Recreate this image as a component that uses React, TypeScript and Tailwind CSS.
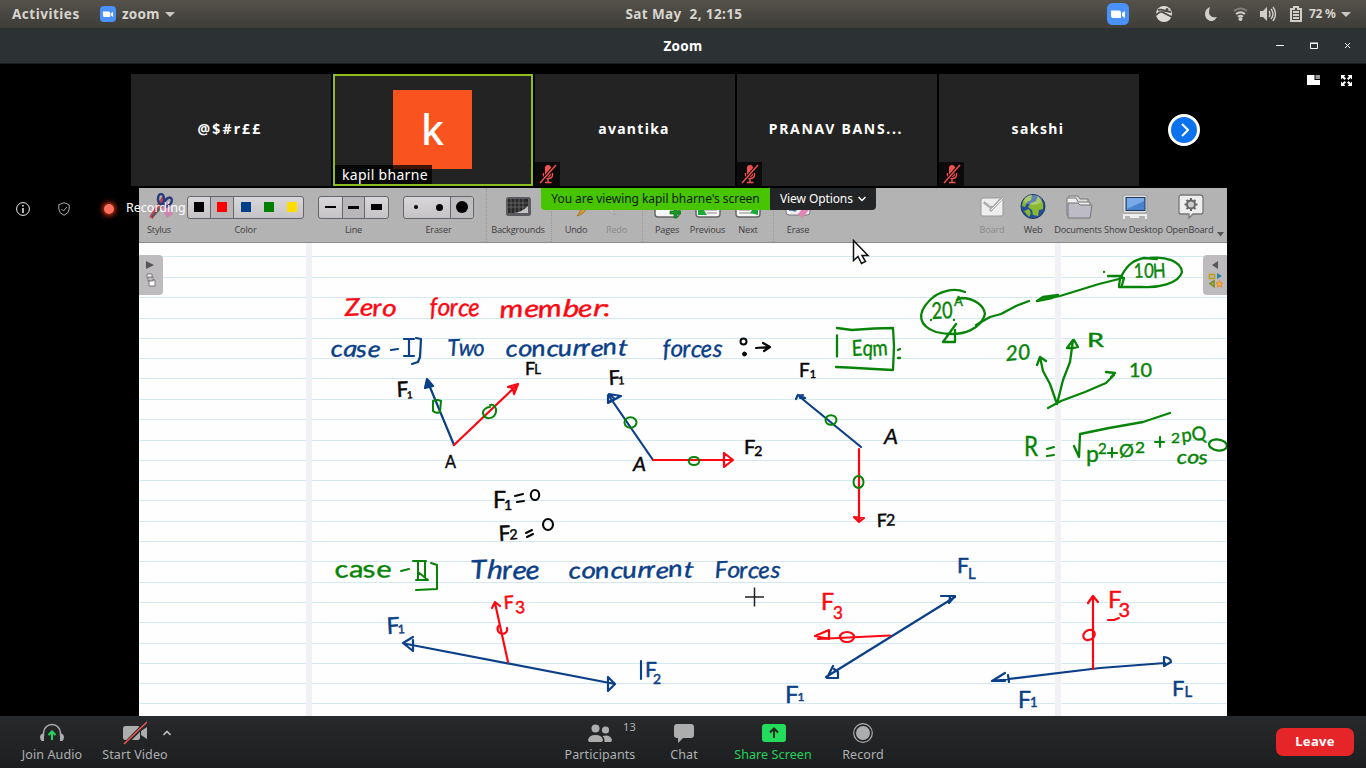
import React from "react";

const INK = { red: "#fb0812", blue: "#0b3f87", green: "#078407", black: "#080808" };

type InkProps = { x: number; y: number; w: number; s?: number; c: string; r?: number; i?: boolean; children: string };

const wobble = "0 -.8 1.1 -.6 .8 -.9 .5 .6 -.9 .4";
const tilt = "-3 4 -4 5 -3 4 -5 3 -4 5";

function Ink({ x, y, w, s = 23, c, r = 0, i = false, children }: InkProps) {
  const loose = children.length > 2;
  return (
    <text
      x={x}
      y={y}
      dy={loose ? wobble : undefined}
      rotate={loose ? tilt : undefined}
      textLength={w}
      lengthAdjust="spacingAndGlyphs"
      fontSize={s}
      fill={c}
      stroke={c}
      strokeWidth={0.4}
      fontStyle={i ? "italic" : "normal"}
      transform={r ? `rotate(${r} ${x} ${y})` : undefined}
    >
      {children}
    </text>
  );
}

type ForceProps = { x: number; y: number; s: number; n: string; ns: number; dx?: number; dy?: number; c: string; r?: number };

function Force({ x, y, s, n, ns, dx = 0, dy = 1, c, r = 0 }: ForceProps) {
  return (
    <text x={x} y={y} fontSize={s} fill={c} stroke={c} strokeWidth={0.5} transform={r ? `rotate(${r} ${x} ${y})` : undefined}>
      F<tspan dx={dx} dy={dy} fontSize={ns}>{n}</tspan>
    </text>
  );
}

const ruleYs = [256.5, 277.5, 297.5, 318.5, 338.5, 358.5, 378.5, 399.5, 419.5, 440.5, 460.5, 480.5, 500.5, 521.5, 541.5, 561.5, 582.5, 602.5, 622.5, 643.5, 663.5, 683.5, 703.5];

function Notebook() {
  const { red, blue, green, black } = INK;
  return (
    <svg className="block h-[473px] w-[1088px] bg-[#fefefe] font-['Lato',sans-serif]" viewBox="139 243 1088 473" fill="none" strokeLinecap="round" strokeLinejoin="round">
      {ruleYs.map((y) => (
        <path key={y} d={`M139 ${y}H1227`} stroke="#d3e8f1" />
      ))}
      <path d="M306 243h6v473h-6zM1055 243h6v473h-6z" fill="#f1f0f4" />

      <Ink x={345} y={316} w={51} s={24} c={red} i>Zero</Ink>
      <Ink x={430} y={316} w={50} s={25} c={red} i>force</Ink>
      <Ink x={500} y={318} w={111} s={24} c={red} r={-1} i>member:</Ink>

      <Ink x={331} y={357} w={49} s={23} c={blue} i>case</Ink>
      <path d="M391 350l7-1" stroke={blue} strokeWidth="2.2" />
      <path d="M404 339h10M409 339v17M404 356h10M416 338l5 1-1 18-2 5-6 2" stroke={blue} strokeWidth="2.2" />
      <Ink x={448} y={356} w={37} s={23} c={blue} i>Two</Ink>
      <Ink x={506} y={357} w={121} s={23} c={blue} r={-1} i>concurrent</Ink>
      <Ink x={663} y={357} w={59} s={24} c={blue} i>forces</Ink>
      <circle cx="743.5" cy="341.5" r="3" stroke={black} strokeWidth="2" />
      <circle cx="744.5" cy="354" r="2" fill={black} stroke={black} />
      <path d="M756 348l13-1M763 343l7 4-6 4" stroke={black} strokeWidth="2.2" />

      <g stroke={green} strokeWidth="2.3">
        <path d="M837 335.5v21M837 328l15 2 22-1.5 19-.5 1 18-1 24-19-1-26-1.500-12-.5" />
        <path d="M898 350l2-1M898 358h2" />
      </g>
      <Ink x={852} y={356} w={36} s={22} c={green}>Eqm</Ink>

      <g strokeWidth="2.2">
        <path d="M454 445L427 380" stroke={blue} />
        <path d="M425 388l2-9 6 7z" stroke={blue} fill={blue} />
        <path d="M454 445L517 385M508 387l10-3-4 10-1-6z" stroke={red} />
        <path d="M433 401q4-2 8 0l-1 11q-4 2-7-1z" stroke={green} strokeWidth="2" />
        <path d="M490 405c4-1 7 3 6 7-2 8-12 8-13 1 0-3 3-6 7-6" stroke={green} strokeWidth="2" />
        <path d="M653 460L609 396M608 395v8l13-7-12-2 6 5-7 3" stroke={blue} />
        <path d="M653 460H731M724 453v14l9-7z" stroke={red} />
        <path d="M861 447L800 397M796 399l2-4 7 3-5 0M797 396l6-1" stroke={blue} />
        <path d="M859 449V521M854 517l5 5 5-4z" stroke={red} />
        <g stroke={green} strokeWidth="2">
          <ellipse cx="630.5" cy="422.500" rx="6" ry="5.300" />
          <ellipse cx="694" cy="461" rx="5.300" ry="4" />
          <ellipse cx="831" cy="420" rx="5.500" ry="4.800" />
          <ellipse cx="858.500" cy="482" rx="5" ry="6" />
        </g>
      </g>
      <Force x={397} y={397} s={21} n="1" ns={10} dx={-2} dy={2} c={black} r={-3} />
      <Force x={525} y={375} s={18} n="L" ns={13} dx={-1} dy={-1} c={black} />
      <Force x={609} y={385} s={20} n="1" ns={11} dx={-2} dy={0} c={black} r={-3} />
      <Force x={744} y={454} s={20} n="2" ns={14} dx={-1} dy={2} c={black} />
      <Force x={799} y={377} s={19} n="1" ns={11} c={black} />
      <Force x={877} y={527} s={18} n="2" ns={16} dx={-1} dy={-1} c={black} r={-2} />
      <Ink x={445} y={468} w={11} s={17} c={black}>A</Ink>
      <Ink x={633} y={471} w={13} s={19} c={black} i>A</Ink>
      <Ink x={884} y={444} w={14} s={21} c={black} i>A</Ink>
      <Force x={493} y={508} s={23} n="1" ns={14} dx={-2} dy={2} c={black} />
      <path d="M515 496l8-2M517 502l7-1" stroke={black} strokeWidth="2.1" />
      <ellipse cx="535" cy="495" rx="4.200" ry="5" stroke={black} strokeWidth="2.1" />
      <Force x={499} y={541} s={21} n="2" ns={14} dx={-1} dy={-1} c={black} r={-3} />
      <path d="M526 533l6-3M527 537l6-3" stroke={black} strokeWidth="2.1" />
      <ellipse cx="548" cy="524.500" rx="5" ry="5.500" stroke={black} strokeWidth="2.1" />

      <Ink x={335} y={578} w={56} s={24} c={green} r={-1}>case</Ink>
      <path d="M401 571l8-2M413 561h13M418 561v19M425 562v18M416 580h12l-10-8M431 563l6 2v24l-21 1" stroke={green} strokeWidth="2" />
      <Ink x={471} y={579} w={69} s={26} c={blue} i>Three</Ink>
      <Ink x={569} y={579} w={124} s={23} c={blue} r={-1} i>concurrent</Ink>
      <Ink x={715} y={578} w={65} s={23} c={blue} i>Forces</Ink>

      <g strokeWidth="2.2">
        <path d="M404 643.500L615 684M413 637l-10 6 10 8v-11M608 677v14l7-7-7-7" stroke={blue} />
        <path d="M508 662L495 603M492 608l3-6 5 4M500 625c-4 2-3 8 2 9 4 0 6-3 5-6" stroke={red} />
        <path d="M826 677L955 597M833 666l-6 12h11l0-6-4-3M941 596l14 0-6 7 1-6" stroke={blue} />
        <path d="M890 635.500L818 639M829 630l-14 6 14 3z" stroke={red} />
        <ellipse cx="847" cy="637" rx="7" ry="5" stroke={red} />
        <path d="M992 681L1100 668 1165 663M1005 673l-13 8 13 0M1008 675l1 7M1164 657q7 1 7 5l-7 4v-9" stroke={blue} />
        <path d="M1093 669V597M1088 603l5-7 5 6" stroke={red} />
        <ellipse cx="1089" cy="635" rx="6" ry="4.800" stroke={red} transform="rotate(-30 1089 635)" />
      </g>
      <Force x={387} y={634} s={23} n="1" ns={12} dx={-2} dy={0} c={blue} r={-3} />
      <Force x={504} y={609} s={18} n="3" ns={17} dx={1} dy={5} c={red} r={-3} />
      <path d="M641 661v18" stroke={blue} strokeWidth="2.1" />
      <Force x={645} y={677} s={21} n="2" ns={14} dx={-4} dy={7} c={blue} />
      <Force x={785} y={703} s={24} n="1" ns={12} dx={-1} dy={-2} c={blue} />
      <Force x={821} y={610} s={23} n="3" ns={17} dx={-1} dy={9} c={red} />
      <Force x={957} y={573} s={21} n="L" ns={15} dx={-1} dy={6} c={blue} />
      <Force x={1108} y={608} s={24} n="3" ns={20} dx={-3} dy={9} c={red} />
      <path d="M1108 620l6 0 5-2" stroke={red} strokeWidth="2.1" />
      <Force x={1018} y={708} s={23} n="1" ns={13} dx={-1} dy={-1} c={blue} />
      <Force x={1172} y={696} s={22} n="L" ns={15} dx={0} dy={1} c={blue} />

      <g stroke={green} strokeWidth="2.3">
        <path d="M965 292c-12-5-27 0-35 8-14 14-11 26 6 32 30 7 46-6 49-18-1-8-10-16-24-16l-4 2" />
        <path d="M976 325l14-8 11-3 15-8 13-5M1037 301l23-5 39-12 20-5M1037 301l6-4 15-2-6 3-15 3" />
        <path d="M956 324l-13 18h12v-12M1104 272h.1M931 320h.1M954 320h.1M1108 276h14" />
        <path d="M1122 275c6-11 12-15 22-17l13 1M1150 258c15-2 31 3 32 14-3 12-25 16-40 15h-23l1-9 4 0-2 7" />
        <path d="M1048 408l13-7 24-9 21-9 8-8M1106 372l9 1-4 4M1057 404l-7-20-7-13-3-14-3 8M1040 357l6 4M1057 404l6-24 7-18 3-22-6 8 7 0 4-1-4-7" />
        <path d="M1074 446l5 11 1-23 29-6 34-6 27-9" />
      </g>
      <Ink x={932} y={319} w={21} s={23} c={green} r={-3}>20</Ink>
      <Ink x={954} y={306} w={9} s={13} c={green}>A</Ink>
      <Ink x={1134} y={278} w={32} s={20} c={green}>10H</Ink>
      <Ink x={1006} y={361} w={25} s={21} c={green} r={-5} i>20</Ink>
      <Ink x={1087} y={347} w={17} s={19} c={green}>R</Ink>
      <Ink x={1129} y={377} w={23} s={19} c={green}>10</Ink>
      <Ink x={1024} y={456} w={14} s={27} c={green}>R</Ink>
      <path d="M1047 449l7-2M1047 456l7-1" stroke={green} strokeWidth="2.1" />
      <text x={1086} y={462} fontSize={23} fill={green} stroke={green} strokeWidth={0.4}>p<tspan dx={-1} dy={-8} fontSize={15}>2</tspan></text>
      <path d="M1108 453h9M1112 448v9" stroke={green} strokeWidth="2.1" />
      <Ink x={1119} y={457} w={15} s={18} c={green}>Ø</Ink>
      <Ink x={1135} y={453} w={10} s={15} c={green}>2</Ink>
      <path d="M1155 442h9M1160 437v10" stroke={green} strokeWidth="2.1" />
      <Ink x={1171} y={443} w={9} s={14} c={green}>2</Ink>
      <Ink x={1182} y={442} w={25} s={19} c={green} r={-6}>pQ</Ink>
      <Ink x={1177} y={464} w={31} s={19} c={green} i>cos</Ink>
      <ellipse cx="1218" cy="445" rx="9" ry="5.500" stroke={green} strokeWidth="2.3" transform="rotate(8 1218 445)" />
      <path d="M745 597h19M754.500 587.500v19" stroke="#222" strokeWidth="1.500" strokeLinecap="butt" />
    </svg>
  );
}

const Camera = ({ className }: { className: string }) => (
  <svg className={className} viewBox="0 0 22 22">
    <rect width="22" height="22" rx="5.500" fill="#4a91fb" />
    <path d="M4 7.500h8q2 0 2 2V15H6q-2 0-2-2zM15 10l3-2v7l-3-2z" fill="#fff" />
  </svg>
);

const MutedMic = () => (
  <span className="absolute bottom-0 left-0 flex h-6 w-[25px] items-center justify-center bg-[#0b0b0b]">
    <svg className="h-[20px] w-[18px]" viewBox="0 0 18 20" fill="none" stroke="#f4504e">
      <rect x="6" y="1" width="6" height="12" rx="3" fill="#f4504e" stroke="none" />
      <path d="M4.500 9v2q0 3.500 4.500 3.500t4.500-3.500V9M9 14.500V18M6 18.500h6.500" strokeWidth="1.400" />
      <path d="M1 19L17 1" stroke="#0b0b0b" strokeWidth="3.500" />
      <path d="M1 19L17 1" strokeWidth="1.400" />
    </svg>
  </span>
);

function Tile({ name, muted = false, spacing }: { name: string; muted?: boolean; spacing: string }) {
  return (
    <div className="relative flex h-28 w-[200px] items-center justify-center bg-[#232323] pb-[2px] pr-[2px]">
      <span className={`whitespace-nowrap text-sm font-bold text-white ${spacing}`}>{name}</span>
      {muted && <MutedMic />}
    </div>
  );
}

const Dots = ({ className = "" }: { className?: string }) => <i className={`h-[54px] w-0 shrink-0 border-l border-dotted border-[#969696] ${className}`} />;

function Tool({ label, className, faded = false, children }: { label: string; className: string; faded?: boolean; children?: React.ReactNode }) {
  return (
    <div className={`flex h-[54px] shrink-0 flex-col items-center pt-[5px] ${className}`}>
      <div className="flex h-7 items-center justify-center">{children}</div>
      <span className={`mt-[3px] whitespace-nowrap font-['Open_Sans',sans-serif] text-[9.200px] leading-3 tracking-[-0.2px] ${faded ? "text-[#8a8a8a]" : "text-[#3d3d3d]"}`}>{label}</span>
    </div>
  );
}

const group = "flex h-[23px] overflow-hidden rounded-[3px] border border-[#66666a] bg-linear-to-b from-[#d8d6d9] to-[#c5c3c6]";

const PageIcon = ({ kind }: { kind: string }) => (
  <svg className="h-7 w-7" viewBox="0 0 28 28">
    <rect x="2" y="3" width="24" height="21" rx="3" fill="#f7f7f7" stroke="#666" strokeWidth="1.500" />
    {kind === "add" && <path d="M17 18h4v-4h3v4h4v3h-4v4h-3v-4h-4z" fill="#159b22" stroke="#087111" strokeWidth=".7" />}
    {kind === "prev" && <><path d="M4 22V8l9 14z" fill="#19ab33" /><path d="M10 17h13M13 20h10" stroke="#888" /></>}
    {kind === "next" && <><path d="M24 22V8l-8 12z" fill="#19ab33" /><path d="M5 17h11M5 20h13" stroke="#888" /></>}
  </svg>
);

function BoardToolbar() {
  return (
    <div className="flex h-[55px] w-[1088px] border-b border-[#8b8b8b] bg-[#b4b3b4]">
      <Tool label="Stylus" className="w-10">
        <svg className="ml-1 h-7 w-7" viewBox="0 0 28 28" fill="none">
          <path d="M7 20L17 4M4 25l3-5" stroke="#c64353" strokeWidth="4" />
          <path d="M16 10l7 13" stroke="#cc86ad" strokeWidth="7" />
          <path d="M5 24L18 10" stroke="#555" strokeWidth="2" />
          <ellipse cx="14" cy="6" rx="3" ry="5" stroke="#263d7c" strokeWidth="2.500" />
          <ellipse cx="21" cy="9" rx="3" ry="5" stroke="#263d7c" strokeWidth="2.500" transform="rotate(35 21 9)" />
        </svg>
      </Tool>
      <Tool label="Color" className="ml-2 w-[117px]">
        <div className={`${group} w-[117px]`}>
          <i className="flex w-[23px] items-center justify-center border-r border-[#66666a]"><b className="size-[10px] bg-black" /></i>
          <i className="flex w-[23px] items-center justify-center border-r border-[#66666a] bg-[#b8b6b8]"><b className="size-[10px] bg-[#ff0000]" /></i>
          <i className="flex w-[23px] items-center justify-center"><b className="size-[10px] bg-[#003f87]" /></i>
          <i className="flex w-[23px] items-center justify-center"><b className="size-[10px] bg-[#008000]" /></i>
          <i className="flex w-[23px] items-center justify-center"><b className="size-[10px] bg-[#ffdd00]" /></i>
        </div>
      </Tool>
      <Tool label="Line" className="ml-[14px] w-[71px]">
        <div className={`${group} w-[71px]`}>
          <i className="flex w-6 items-center justify-center border-r border-[#66666a]"><b className="h-[2px] w-[11px] bg-black" /></i>
          <i className="flex w-[22px] items-center justify-center border-r border-[#66666a] bg-[#b8b6b8]"><b className="h-[3px] w-[11px] bg-black" /></i>
          <i className="flex w-[23px] items-center justify-center"><b className="h-[6px] w-[11px] bg-black" /></i>
        </div>
      </Tool>
      <Tool label="Eraser" className="ml-[14px] w-[71px]">
        <div className={`${group} w-[71px]`}>
          <i className="flex w-6 items-center justify-center"><b className="size-1 rounded-full bg-black" /></i>
          <i className="flex w-[23px] items-center justify-center border-r border-[#66666a]"><b className="size-[7px] rounded-full bg-black" /></i>
          <i className="flex w-[22px] items-center justify-center bg-[#bebcbf]"><b className="size-3 rounded-full bg-black" /></i>
        </div>
      </Tool>
      <Dots className="ml-[12px]" />
      <Tool label="Backgrounds" className="w-[62px]">
        <svg className="h-7 w-7" viewBox="0 0 28 28">
          <rect x="2" y="4" width="25" height="19" rx="2.500" fill="#5c5c60" />
          <rect x="4" y="6" width="20" height="14" fill="#292929" />
          <path d="M7 6v14M11 6v14M15 6v14M19 6v14M4 10h20M4 14h20" stroke="#777" strokeWidth=".7" />
          <path d="M10 20q8-1 14-7v7z" fill="#c4c4c4" />
        </svg>
      </Tool>
      <Dots className="ml-[2px]" />
      <Tool label="Undo" className="ml-1 w-[40px]">
        <svg className="h-7 w-7" viewBox="0 0 28 28"><path d="M8 8q18-4 17 6-2 7-10 9 5-6 3-8-3-2-10-1z" fill="#d69c32" stroke="#a57924" /></svg>
      </Tool>
      <Tool label="Redo" faded className="w-[41px]">
        <svg className="h-7 w-7" viewBox="0 0 28 28"><path d="M20 9Q3 4 4 13q1 7 9 9-5-5-2-8 3-2 9-1z" fill="#c2c1c2" stroke="#a6a5a6" /></svg>
      </Tool>
      <Dots className="ml-[5px]" />
      <Tool label="Pages" className="ml-1 w-[40px]"><PageIcon kind="add" /></Tool>
      <Tool label="Previous" className="w-[41px]"><PageIcon kind="prev" /></Tool>
      <Tool label="Next" className="w-[40px]"><PageIcon kind="next" /></Tool>
      <Dots className="ml-[5px]" />
      <Tool label="Erase" className="ml-1 w-[40px]">
        <svg className="h-7 w-7" viewBox="0 0 28 28"><rect x="2" y="3" width="24" height="19" rx="3" fill="#eee" stroke="#777" /><path d="M5 17h3l3 1 3-3" stroke="#426ca4" strokeWidth="1.500" fill="none" /><path d="M14 21l6-7 5 3-7 8z" fill="#e382b5" /></svg>
      </Tool>
      <Tool label="Board" faded className="ml-auto w-[42px]">
        <svg className="h-7 w-7" viewBox="0 0 28 28" fill="none"><rect x="3" y="5" width="22" height="18" rx="2" fill="#eeeeef" stroke="#999" /><path d="M6 9l8 6M12 18L25 4" stroke="#aaa" strokeWidth="3" /><path d="M7 8l6 5M13 17L25 5" stroke="#fff" /></svg>
      </Tool>
      <Tool label="Web" className="w-[40px]">
        <svg className="h-7 w-7" viewBox="0 0 28 28"><circle cx="14" cy="13.500" r="12" fill="#244f98" stroke="#21375f" /><path d="M4 8q4-6 9-6l-1 5-4 2-2 5-3-1zM12 10l5-2 2-5 5 7 0 6-4 1-1 6-5-1-1-5-4-3zM5 18l5-2 2 4-2 4z" fill="#8bb832" /><ellipse cx="14" cy="7" rx="9" ry="5" fill="#fff" opacity=".28" /></svg>
      </Tool>
      <Tool label="Documents" className="w-[50px]">
        <svg className="ml-[2px] h-7 w-7" viewBox="0 0 28 28" stroke="#777"><path d="M4 20V3h9l2 3h8v14z" fill="#ddd" /><path d="M2 22V5h9l2 4h12v13z" fill="#eee" /><path d="M3 25V10h10l2 2h12l-2 13z" fill="#bdbbc5" /></svg>
      </Tool>
      <Tool label="Show Desktop" className="w-[61px]">
        <svg className="ml-[2px] h-7 w-7" viewBox="0 0 28 28"><rect x="2" y="2" width="24" height="18" rx="2" fill="#ddd" stroke="#999" /><rect x="5" y="4.500" width="19" height="13" fill="#4a82cf" stroke="#253b59" /><path d="M6 16l17-8V5H6z" fill="#8cbaf1" opacity=".7" /><path d="M3 26v-4h22v4M9 24h9" fill="none" stroke="#eee" strokeWidth="2" /></svg>
      </Tool>
      <Tool label="OpenBoard" className="w-[51px]">
        <svg className="h-7 w-7" viewBox="0 0 28 28"><path d="M5 2h19q3 0 3 3v14q0 2-2 2H17l-4 4v-4H5q-2 0-2-2V5q0-3 2-3z" fill="#eee" stroke="#777" strokeWidth="1.300" /><g stroke="#666" strokeWidth="2"><circle cx="15" cy="11.500" r="4" fill="#ccc" /><path d="M15 5v2M15 16v2M8.500 11.500h2M19.500 11.500h2M10.500 7l1.500 1.500M18 14.500l1.500 1.500M19.500 7L18 8.500M12 14.500L10.500 16" /></g></svg>
      </Tool>
      <svg className="ml-[2px] mr-[3px] mt-[44px] h-[5px] w-[7px]" viewBox="0 0 7 5"><path d="M0 0h7L3.500 4.500z" fill="#555" /></svg>
    </div>
  );
}

function Control({ label, className, green = false, children }: { label: string; className: string; green?: boolean; children: React.ReactNode }) {
  return (
    <div className={`flex shrink-0 flex-col items-center ${className}`}>
      <div className="flex h-[34px] items-center justify-center">{children}</div>
      <span className={`whitespace-nowrap text-[12.500px] leading-[9px] tracking-[0.1px] ${green ? "text-[#25d35a]" : "text-[#aeb0b2]"}`}>{label}</span>
    </div>
  );
}

export default function App() {
  return (
    <div className="relative flex h-[768px] w-[1366px] flex-col overflow-hidden bg-black font-['Noto_Sans','DejaVu_Sans',sans-serif] text-white">
      <header className="grid h-7 shrink-0 grid-cols-[1fr_auto_1fr] items-center bg-linear-to-b from-[#55524b] to-[#3e3d38] text-[13.500px] font-bold text-[#d8d5ce]">
        <div className="flex items-center pl-3">
          <span className="w-[68px] whitespace-nowrap tracking-[0.5px]">Activities</span>
          <Camera className="ml-5 size-4" />
          <span className="ml-[6px] w-[37px] tracking-[0.2px]">zoom</span>
          <svg className="ml-[6px] h-[5px] w-[10px]" viewBox="0 0 10 5"><path d="M0 0h10L5 5z" fill="#ccc9c2" /></svg>
        </div>
        <span className="whitespace-pre pl-[2px] text-[13.500px] tracking-[0.4px]">Sat May  2, 12:15</span>
        <div className="flex items-center justify-end pr-[15px]">
          <Camera className="size-[22px]" />
          <svg className="ml-[27px] size-4" viewBox="0 0 16 16"><circle cx="8" cy="8" r="8" fill="#dedbd5" /><path d="M0 9q5-5 8-2l8 4M2 4q5-1 7 1l6 1" stroke="#4b4943" strokeWidth="1.800" fill="none" /><circle cx="11" cy="3.500" r="1.500" fill="#4b4943" /></svg>
          <svg className="ml-[33px] h-[14px] w-[12px]" viewBox="0 0 12 14"><path d="M5 0Q0 2 0 7t5 7q4 1 7-4-7 1-8-4 0-3 1-6z" fill="#d1cec7" /></svg>
          <svg className="ml-[16px] h-[14px] w-[15px]" viewBox="0 0 15 14" fill="none" stroke="#d1cec7" strokeWidth="2"><path d="M1 4q6.500-5 13 0" opacity=".4" /><path d="M3 7q4.500-3.500 9 0M5 9.700q2.500-2 5 0" /><circle cx="7.500" cy="12" r="1" fill="#d1cec7" /></svg>
          <svg className="ml-[12px] h-4 w-4" viewBox="0 0 16 16" fill="none" stroke="#d1cec7" strokeWidth="1.400"><path d="M0 5h3l4-4v14l-4-4H0z" fill="#d1cec7" stroke="none" /><path d="M9 5q2 3 0 6M11 3q4 5 0 10M13 1q5 7 0 14" /></svg>
          <svg className="ml-[14px] h-4 w-3" viewBox="0 0 12 16" fill="none" stroke="#d1cec7" strokeWidth="2"><path d="M1 3h3V1h4v2h3v12H1zM3 6h6M3 9h6M3 12h6" /></svg>
          <span className="ml-[7px] w-[27px] whitespace-nowrap text-xs tracking-[-0.3px]">72 %</span>
          <svg className="ml-[5px] h-[5px] w-[10px]" viewBox="0 0 10 5"><path d="M0 0h10L5 5z" fill="#ccc9c2" /></svg>
        </div>
      </header>

      <div className="grid h-9 shrink-0 grid-cols-[1fr_auto_1fr] items-center border-b border-[#171c1f] bg-[#2c3134]">
        <span />
        <span className="pt-px text-[13.500px] font-bold tracking-[0.3px]">Zoom</span>
        <svg className="mr-[13px] h-3 w-[78px] justify-self-end" viewBox="0 0 78 12" fill="none" stroke="#fff"><path d="M1 5.500h8" /><path d="M35.500 3.500h7v5h-7zM35 3h8" /><path d="M70 3l5 5M75 3l-5 5" /></svg>
      </div>

      <div className="flex h-[124px] shrink-0 items-start gap-[2px] pl-[131px] pt-[10px]">
        <Tile name="@$#r££" spacing="tracking-[2.2px]" />
        <div className="relative flex h-28 w-[200px] justify-center border-2 border-[#8ebd22] bg-[#232323] pr-[2px] pt-[14px]">
          <div className="flex size-[79px] items-center justify-center bg-[#f9541f] pl-px text-[41px] font-medium">k</div>
          <span className="absolute bottom-0 left-0 flex h-[19px] w-[97px] items-center whitespace-nowrap bg-black/75 pl-[7px] text-sm tracking-[0.3px]">kapil bharne</span>
        </div>
        <Tile name="avantika" muted spacing="tracking-[1.3px]" />
        <Tile name="PRANAV BANS..." muted spacing="tracking-[1.7px]" />
        <Tile name="sakshi" muted spacing="tracking-[1.4px]" />
        <div className="ml-[27px] mt-10 flex size-8 items-center justify-center rounded-full border-[3px] border-white bg-[#0d72ee]">
          <svg className="ml-[2px] h-[14px] w-2" viewBox="0 0 8 14" fill="none" stroke="#fff" strokeWidth="2"><path d="M1 1l6 6-6 6" /></svg>
        </div>
        <svg className="ml-auto mr-[14px] h-3 w-[45px]" viewBox="0 0 45 12"><path d="M0 1h7.500v5H13v5H0z" fill="#fff" /><path d="M8.500 1H13v4H8.500z" fill="#999" /><path d="M34 1h4.500L37 2.500l2 2L37.500 6l-2-2L34 5.500zM45 1h-4.500L42 2.500l-2 2L41.500 6l2-2L45 5.500zM34 12h4.500L37 10.500l2-2L37.500 7l-2 2L34 7.500zM45 12h-4.500l1.500-1.500-2-2L41.500 7l2 2L45 7.500z" fill="#fff" /></svg>
      </div>

      <main className="flex h-[528px] shrink-0 bg-black">
        <aside className="relative z-10 flex h-[41px] w-[139px] shrink-0 items-center pl-4 text-[12.500px]">
          <svg className="size-[14px] shrink-0" viewBox="0 0 14 14" fill="none" stroke="#eee"><circle cx="7" cy="7" r="6.400" /><path d="M7 6v5M7 3v1.500" strokeWidth="1.500" /></svg>
          <svg className="ml-[28px] h-[14px] w-3 shrink-0" viewBox="0 0 12 14" fill="none" stroke="#aaa"><path d="M6 .7l5.200 2V7q0 4-5.200 6.300Q.8 11 .8 7V2.700z" /><path d="M3.500 7l2 2 3.500-4" /></svg>
          <span className="ml-[34px] size-[10px] shrink-0 rounded-full bg-[#ff7060] shadow-[0_0_5px_2px_#b72e12]" />
          <span className="ml-[12px] whitespace-nowrap">Recording</span>
        </aside>
        <section className="relative w-[1088px] shrink-0">
          <BoardToolbar />
          <Notebook />
          <div className="absolute left-0 top-[67px] flex h-10 w-6 flex-col items-center rounded-r bg-[#bdbbbd] pt-[6px]">
            <svg className="h-[27px] w-4" viewBox="0 0 16 27"><path d="M3 0l8 4-8 4z" fill="#555" /><path d="M4 13h5v4H4zM5 16h5v4H5zM6 19h6v6H6z" fill="#fff" stroke="#777" /></svg>
          </div>
          <div className="absolute right-0 top-[67px] flex h-10 w-6 flex-col items-center rounded-l bg-[#bdbbbd] pt-[6px]">
            <svg className="h-[27px] w-4" viewBox="0 0 16 27"><path d="M11 0L5 4l6 4z" fill="#555" /><rect x="2.500" y="13.500" width="5" height="4" fill="none" stroke="#c39d12" strokeWidth="1.500" /><path d="M10 12l5 3-5 3z" fill="#2683a8" /><path d="M7 20l-4 2.500 4 3z" fill="none" stroke="#7b8a14" strokeWidth="1.500" /><path d="M12.500 19.500l1 2.200 2.300.3-1.700 1.600.5 2.400-2.100-1.200-2.100 1.200.5-2.400-1.700-1.600 2.300-.3z" fill="#f5b04a" stroke="#e68823" /></svg>
          </div>
          <div className="absolute left-[402px] top-0 flex h-[22px] overflow-hidden rounded-b text-xs">
            <span className="flex w-[229px] items-center justify-center whitespace-nowrap bg-[#47c500] tracking-[-0.05px] text-[#10200a]">You are viewing kapil bharne's screen</span>
            <span className="flex w-[106px] items-center whitespace-nowrap bg-[#232426] pl-[10px] tracking-[-0.1px]">View Options
              <svg className="ml-[5px] h-[6px] w-2" viewBox="0 0 8 6" fill="none" stroke="#fff" strokeWidth="1.500"><path d="M.5 1L4 4.500 7.500 1" /></svg>
            </span>
          </div>
          <svg className="absolute left-[713px] top-[51px] h-[28px] w-[18px]" viewBox="0 0 18 28"><path d="M1.500 1.500v20l4.500-4 3.500 7 4-2-3.500-6H16z" fill="#fff" stroke="#111" strokeWidth="1.500" /></svg>
        </section>
      </main>

      <footer className="flex h-[52px] shrink-0 items-start bg-linear-to-b from-[#27292b] to-[#1d1e20]">
        <Control label="Join Audio" className="ml-5 w-16">
          <svg className="h-5 w-6" viewBox="0 0 24 20" fill="none"><path d="M3.500 13v-3a8.500 8.500 0 0117 0v3" stroke="#adadad" strokeWidth="1.500" /><path d="M4 10v8H2q-2-1-2-4t4-4zM20 10v8h2q2-1 2-4t-4-4z" fill="#adadad" /><path d="M12 17V9M8.500 12L12 8.500l3.500 3.500" stroke="#24d65b" strokeWidth="2" /></svg>
        </Control>
        <Control label="Start Video" className="ml-4 w-[70px]">
          <svg className="h-6 w-6" viewBox="0 0 24 24"><rect y="5" width="17" height="14" rx="2.500" fill="#adadad" /><path d="M18 10l6-4v12l-6-4z" fill="#adadad" /><path d="M1 24L24 1" stroke="#252729" strokeWidth="4" /><path d="M1 23L24 1" stroke="#f3554e" strokeWidth="1.500" /></svg>
        </Control>
        <svg className="ml-[-7px] mt-[14px] h-[6px] w-2" viewBox="0 0 8 6" fill="none" stroke="#bbb" strokeWidth="1.700"><path d="M.5 5L4 1.500 7.500 5" /></svg>
        <Control label="Participants" className="relative ml-[393px] w-[72px]">
          <svg className="h-[19px] w-6" viewBox="0 0 24 19" fill="#adadad"><circle cx="7.500" cy="4.500" r="4" /><circle cx="17.500" cy="6" r="3.600" /><path d="M0 16q1-5 7.500-5t7.500 5q0 2-2 2H2q-2 0-2-2zM16.500 18v-2q0-2-2-4 8-2 9.500 4 0 2-2 2z" /></svg>
          <span className="absolute left-[59px] top-[5px] text-[11px] leading-3 tracking-[0.3px] text-[#b0b2b4]">13</span>
        </Control>
        <Control label="Chat" className="ml-[32px] w-8">
          <svg className="h-[19px] w-5" viewBox="0 0 20 19"><path d="M3 0h14q3 0 3 3v8q0 3-3 3H9l-5 5v-5H3q-3 0-3-3V3q0-3 3-3z" fill="#adadad" /></svg>
        </Control>
        <Control label="Share Screen" green className="ml-[32px] w-[82px]">
          <svg className="ml-[2px] h-[18px] w-6" viewBox="0 0 24 18" fill="none"><rect width="24" height="18" rx="3" fill="#24dc5b" /><path d="M12 14V5M8 8.500L12 4.500l4 4" stroke="#202820" strokeWidth="2" /></svg>
        </Control>
        <Control label="Record" className="ml-[28px] w-[42px]">
          <svg className="size-5" viewBox="0 0 20 20"><circle cx="10" cy="10" r="9.300" fill="none" stroke="#adadad" strokeWidth="1.200" /><circle cx="10" cy="10" r="7" fill="#adadad" /></svg>
        </Control>
        <button className="ml-auto mr-3 mt-3 h-7 w-[78px] rounded-[7px] bg-[#e52528] text-[13px] font-bold tracking-[0.3px]">Leave</button>
      </footer>
    </div>
  );
}
